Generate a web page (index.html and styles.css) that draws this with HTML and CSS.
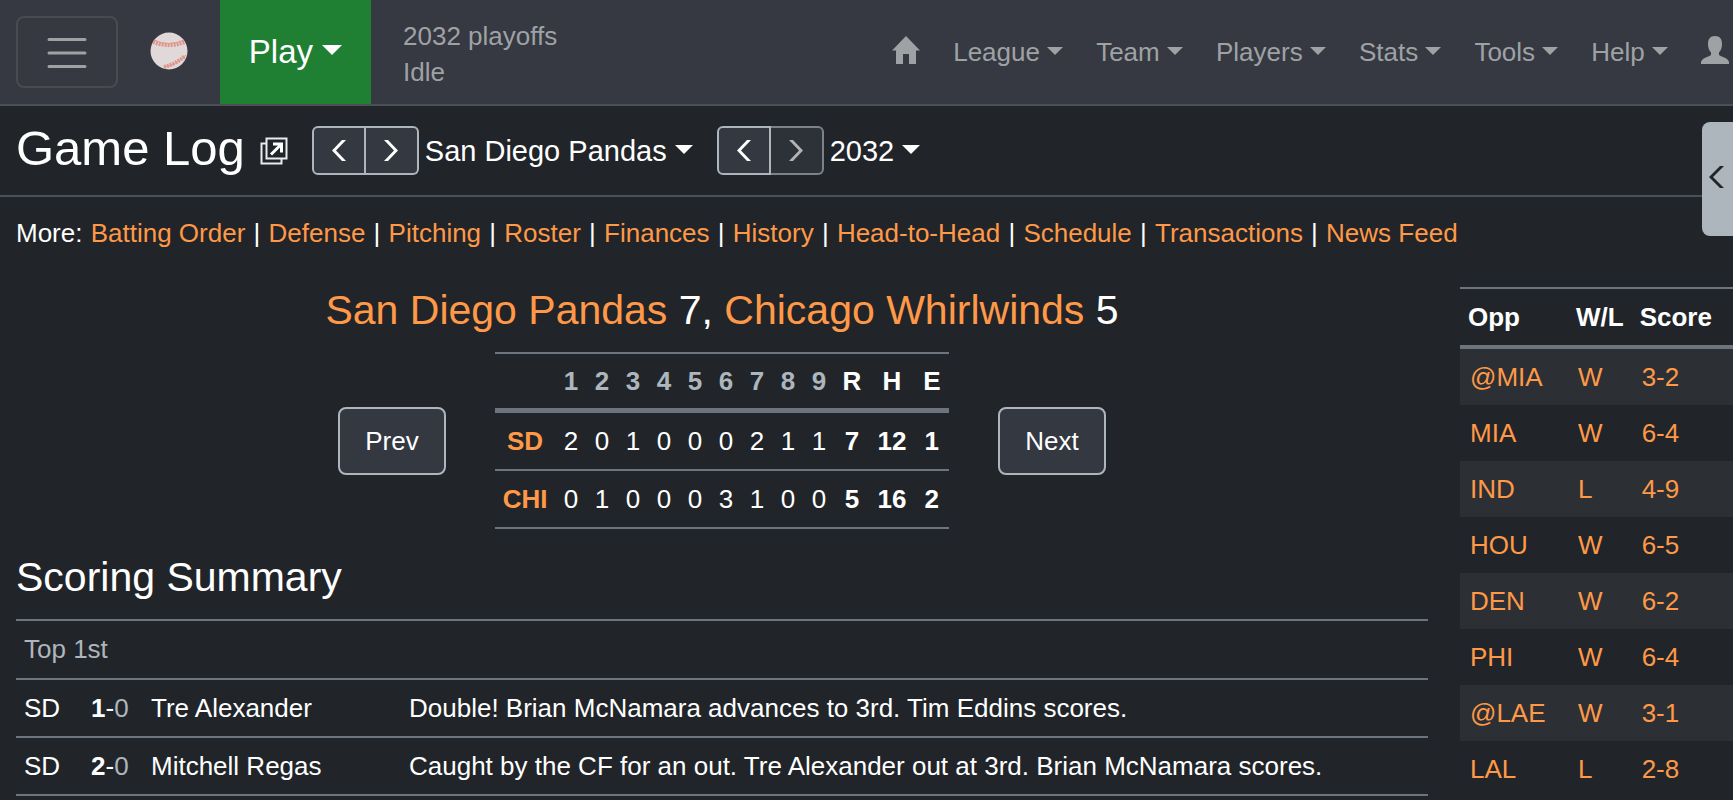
FILE: index.html
```html
<!DOCTYPE html>
<html lang="en">
<head>
  <meta charset="UTF-8" />
  <title>Game Log</title>
  <meta name="viewport" content="width=device-width, initial-scale=1.0" />
  <link rel="stylesheet" href="styles.css">
</head>
<body>
  <nav class="navbar">
    <button class="menu-toggle" type="button" aria-label="Toggle navigation">
      <svg width="40" height="30" viewBox="0 0 40 30"><path d="M2 2.500h36M2 16h36M2 29.500h36" /></svg>
    </button>
    <a class="brand" href="#" aria-label="Dashboard">
      <svg width="38" height="38" viewBox="0 0 38 38">
        <circle cx="19" cy="19" r="18.500" fill="#e1d9d9" />
        <path class="seam" d="M4 8q14 7 30 0M14 35q12-2 22-12" />
        <path class="stitch" d="M3 10q16 6 32 0M14 35q12-3 21-11" />
      </svg>
    </a>
    <button class="play-button" type="button">Play <span class="caret"></span></button>
    <div class="status">2032 playoffs<br>Idle</div>
    <ul class="nav-links">
      <li><a href="#" aria-label="Dashboard"><svg class="nav-icon" width="28" height="28" viewBox="0 0 28 28"><path d="M14 0L28 14.500h-4V28h-7V18h-6v10H4V14.500H0z" /></svg></a></li>
      <li><a href="#">League <span class="caret"></span></a></li>
      <li><a href="#">Team <span class="caret"></span></a></li>
      <li><a href="#">Players <span class="caret"></span></a></li>
      <li><a href="#">Stats <span class="caret"></span></a></li>
      <li><a href="#">Tools <span class="caret"></span></a></li>
      <li><a href="#">Help <span class="caret"></span></a></li>
      <li><a href="#" aria-label="Account"><svg class="nav-icon" width="28" height="28" viewBox="0 0 28 28"><path d="M14 0c5 0 7 3 7 8 0 4-1 6-3 8.500V19c3 2 9 3 10 7v2H0v-2c1-4 7-5 10-7v-2.500C8 14 7 12 7 8c0-5 2-8 7-8z" /></svg></a></li>
    </ul>
  </nav>

  <header class="title-bar">
    <h1>Game Log</h1>
    <a class="new-window" href="#" aria-label="Open in new window">
      <svg width="28" height="28" viewBox="0 0 28 28"><path d="M6.500 1.500h20v20h-20z" /><path d="M6 6.500H1.500v20h20V22" /><path class="arrow" d="M11 17.500L21 7.500M13 7h8.500v8.500" /></svg>
    </a>
    <div class="stepper">
      <button type="button" aria-label="Previous team"><svg width="14" height="21" viewBox="0 0 14 21"><path d="M10 0h4L4 10.500 14 21h-4L0 10.500z" /></svg></button>
      <button type="button" aria-label="Next team"><svg width="14" height="21" viewBox="0 0 14 21"><path d="M4 0H0l10 10.500L0 21h4l10-10.500z" /></svg></button>
    </div>
    <a class="picker" href="#">San Diego Pandas <span class="caret"></span></a>
    <div class="stepper">
      <button type="button" aria-label="Previous season"><svg width="14" height="21" viewBox="0 0 14 21"><path d="M10 0h4L4 10.500 14 21h-4L0 10.500z" /></svg></button>
      <button type="button" aria-label="Next season" disabled><svg width="14" height="21" viewBox="0 0 14 21"><path d="M4 0H0l10 10.500L0 21h4l10-10.500z" /></svg></button>
    </div>
    <a class="picker" href="#">2032 <span class="caret"></span></a>
  </header>

  <button class="drawer-tab" type="button" aria-label="Open league panel">
    <svg width="15" height="22" viewBox="0 0 15 22"><path d="M11 0h4L4 11l11 11h-4L0 11z" /></svg>
  </button>

  <p class="more">
    More: <a href="#">Batting Order</a> | <a href="#">Defense</a> | <a href="#">Pitching</a> | <a href="#">Roster</a> | <a href="#">Finances</a> | <a href="#">History</a> | <a href="#">Head-to-Head</a> | <a href="#">Schedule</a> | <a href="#">Transactions</a> | <a href="#">News Feed</a>
  </p>

  <div class="content">
    <main class="box-score">
      <h2 class="result"><a href="#">San Diego Pandas</a> 7, <a href="#">Chicago Whirlwinds</a> 5</h2>

      <div class="line-score">
        <button class="btn" type="button">Prev</button>
        <table class="innings">
          <thead>
            <tr><th></th><th>1</th><th>2</th><th>3</th><th>4</th><th>5</th><th>6</th><th>7</th><th>8</th><th>9</th><th class="total">R</th><th class="total">H</th><th class="total">E</th></tr>
          </thead>
          <tbody>
            <tr><th><a href="#">SD</a></th><td>2</td><td>0</td><td>1</td><td>0</td><td>0</td><td>0</td><td>2</td><td>1</td><td>1</td><td class="total">7</td><td class="total">12</td><td class="total">1</td></tr>
            <tr><th><a href="#">CHI</a></th><td>0</td><td>1</td><td>0</td><td>0</td><td>0</td><td>3</td><td>1</td><td>0</td><td>0</td><td class="total">5</td><td class="total">16</td><td class="total">2</td></tr>
          </tbody>
        </table>
        <button class="btn" type="button">Next</button>
      </div>

      <h2>Scoring Summary</h2>
      <table class="scoring">
        <tbody>
          <tr><td class="half-inning" colspan="4">Top 1st</td></tr>
          <tr><td class="team">SD</td><td class="score"><b>1</b>-<span class="muted">0</span></td><td class="player">Tre Alexander</td><td>Double! Brian McNamara advances to 3rd. Tim Eddins scores.</td></tr>
          <tr><td class="team">SD</td><td class="score"><b>2</b>-<span class="muted">0</span></td><td class="player">Mitchell Regas</td><td>Caught by the CF for an out. Tre Alexander out at 3rd. Brian McNamara scores.</td></tr>
        </tbody>
      </table>
    </main>

    <aside class="games">
      <table>
        <thead>
          <tr><th class="opp">Opp</th><th class="wl">W/L</th><th>Score</th></tr>
        </thead>
        <tbody>
          <tr><td><a href="#">@MIA</a></td><td><a href="#">W</a></td><td><a href="#">3-2</a></td></tr>
          <tr><td><a href="#">MIA</a></td><td><a href="#">W</a></td><td><a href="#">6-4</a></td></tr>
          <tr><td><a href="#">IND</a></td><td><a href="#">L</a></td><td><a href="#">4-9</a></td></tr>
          <tr><td><a href="#">HOU</a></td><td><a href="#">W</a></td><td><a href="#">6-5</a></td></tr>
          <tr><td><a href="#">DEN</a></td><td><a href="#">W</a></td><td><a href="#">6-2</a></td></tr>
          <tr><td><a href="#">PHI</a></td><td><a href="#">W</a></td><td><a href="#">6-4</a></td></tr>
          <tr><td><a href="#">@LAE</a></td><td><a href="#">W</a></td><td><a href="#">3-1</a></td></tr>
          <tr><td><a href="#">LAL</a></td><td><a href="#">L</a></td><td><a href="#">2-8</a></td></tr>
        </tbody>
      </table>
    </aside>
  </div>
</body>
</html>
```
FILE: styles.css
```css
:root {
  --bg: #212529;
  --bar: #363941;
  --btn: #343840;
  --line: #495057;
  --table-line: #6c757d;
  --muted: #adb5bd;
  --nav-text: #9fa2a5;
  --link: #ff9947;
  --green: #1f7f33;
}

* {
  box-sizing: border-box;
}

body {
  margin: 0;
  font-family: "Liberation Sans", Arial, sans-serif;
  font-size: 26px;
  line-height: 40px;
  background: var(--bg);
  color: #fff;
}

a {
  color: var(--link);
  text-decoration: none;
}

button {
  font: inherit;
  color: inherit;
  cursor: pointer;
}

svg {
  display: block;
  fill: none;
}

h1,
h2 {
  margin: 0;
  font-weight: 400;
}

h1 {
  padding-bottom: 5px;
  font-size: 49px;
  line-height: 60px;
}

h2 {
  font-size: 41px;
  line-height: 48px;
}

.caret {
  display: inline-block;
  vertical-align: 6px;
  border: 8px solid transparent;
  border-top-color: currentColor;
  border-bottom: 0;
}

/* top navbar */
.navbar {
  display: flex;
  align-items: center;
  height: 106px;
  padding-left: 16px;
  background: var(--bar);
  border-bottom: 2px solid var(--line);
  color: var(--nav-text);
}

.menu-toggle {
  display: flex;
  align-items: center;
  justify-content: center;
  width: 102px;
  height: 72px;
  padding: 0;
  background: none;
  border: 2px solid #484c50;
  border-radius: 8px;
}

.menu-toggle svg {
  overflow: visible;
  stroke: var(--nav-text);
  stroke-width: 3;
  stroke-linecap: round;
}

.brand {
  margin: 0 32px;
  padding-bottom: 3px;
}

.seam,
.stitch {
  stroke: #e0958a;
  stroke-width: 1;
}

.stitch {
  stroke-width: 4;
  stroke-dasharray: 2 1;
}

.play-button {
  align-self: stretch;
  width: 151px;
  padding: 0;
  background: var(--green);
  border: 0;
  color: #fff;
  font-size: 33px;
}

.play-button .caret {
  border-width: 10px;
  border-bottom: 0;
  vertical-align: 8px;
}

.status {
  margin-left: 32px;
  padding-top: 4px;
  line-height: 36px;
}

.nav-links {
  display: flex;
  align-items: center;
  gap: 33px;
  margin: 0 4px 0 auto;
  padding: 0;
  list-style: none;
}

.nav-links a {
  color: inherit;
  white-space: nowrap;
}

.nav-icon {
  margin-bottom: 5px;
  fill: currentColor;
}

/* page title and pickers */
.title-bar {
  display: flex;
  align-items: center;
  height: 91px;
  padding-left: 16px;
  border-bottom: 2px solid var(--line);
}

.new-window {
  margin: 0 24px 0 15px;
}

.new-window svg {
  stroke: #e9ecef;
  stroke-width: 2;
}

.new-window .arrow {
  stroke: #fff;
  stroke-width: 3;
}

.stepper {
  display: flex;
}

.stepper button {
  display: flex;
  align-items: center;
  justify-content: center;
  width: 54px;
  height: 49px;
  padding: 0;
  background: var(--btn);
  border: 2px solid var(--muted);
}

.stepper button:first-child {
  border-radius: 6px 0 0 6px;
}

.stepper button:last-child {
  width: 53px;
  border-left: 0;
  border-radius: 0 6px 6px 0;
}

.stepper button:disabled {
  opacity: 0.65;
}

.stepper svg {
  fill: #fff;
}

.picker {
  margin: 0 24px 0 6px;
  color: #fff;
  font-size: 29px;
}

.picker .caret {
  border-width: 9px;
  border-bottom: 0;
  vertical-align: 7px;
}

.drawer-tab {
  position: absolute;
  top: 122px;
  right: 0;
  width: 31px;
  height: 114px;
  padding: 0 0 5px 7px;
  background: var(--muted);
  border: 0;
  border-radius: 8px 0 0 8px;
}

.drawer-tab svg {
  fill: var(--bg);
}

.more {
  margin: 16px;
}

.more a {
  margin: 0 1px;
}

/* box score */
.content {
  display: flex;
  gap: 32px;
  padding-left: 16px;
}

.box-score {
  flex: 1;
  padding-top: 17px;
}

.result {
  text-align: center;
}

.line-score {
  display: flex;
  align-items: center;
  justify-content: center;
  gap: 49px;
  margin: 18px 0 24px;
}

.btn {
  padding: 12px 25px;
  background: var(--btn);
  border: 2px solid var(--muted);
  border-radius: 8px;
}

table {
  border-collapse: separate;
  border-spacing: 0;
}

th,
td {
  padding: 8px;
}

.innings {
  text-align: center;
  border-bottom: 2px solid var(--table-line);
}

.innings th,
.innings td {
  min-width: 31px;
  border-top: 2px solid var(--table-line);
}

.innings thead th {
  padding: 7px 8px;
  border-bottom: 3px solid var(--table-line);
  color: var(--muted);
}

.innings .total,
.innings thead .total {
  min-width: 35px;
  color: #fff;
  font-weight: 700;
}

.scoring {
  width: 100%;
  margin-top: 18px;
  border-bottom: 2px solid var(--table-line);
}

.scoring td {
  border-top: 2px solid var(--table-line);
}

.scoring .half-inning {
  padding-bottom: 9px;
  color: var(--muted);
}

.scoring .team {
  width: 67px;
}

.scoring .score {
  width: 60px;
  white-space: nowrap;
}

.scoring .player {
  width: 258px;
}

.muted {
  color: var(--muted);
}

/* game list */
.games {
  width: 273px;
  padding-top: 18px;
}

.games table {
  width: 100%;
}

.games th {
  text-align: left;
  border-top: 2px solid var(--table-line);
  border-bottom: 4px solid var(--table-line);
}

.games td {
  padding: 8px 10px;
}

.games .opp {
  width: 108px;
}

.games .wl {
  width: 62px;
}

.games tbody tr:nth-child(odd) {
  background: #2c3034;
}
```
